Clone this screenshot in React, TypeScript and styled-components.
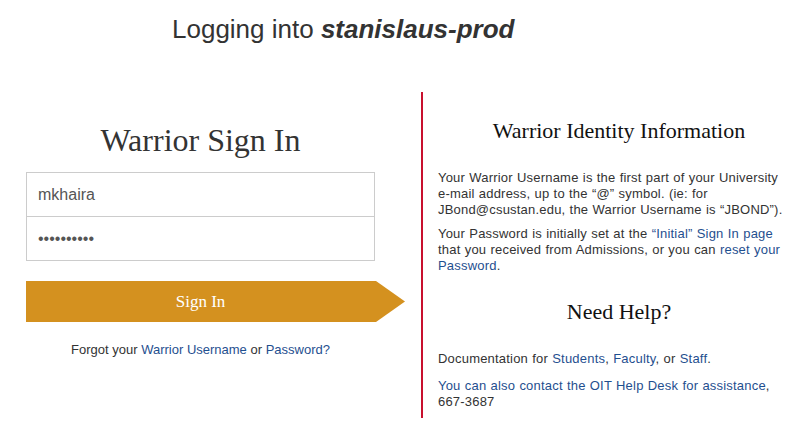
import React from "react";
import styled, { createGlobalStyle } from "styled-components";

const Global = createGlobalStyle`
  html, body { margin: 0; padding: 0; background: #fff; }
  body { font-family: "Liberation Sans", Arial, sans-serif; color: #333; }
  * { box-sizing: border-box; }
`;

const Page = styled.div`
  width: 803px;
  height: 441px;
  overflow: hidden;
`;

const Header = styled.h1`
  margin: 0;
  height: 92px;
  padding: 14px 0 0 172px;
  font-family: "Liberation Sans", Arial, sans-serif;
  font-size: 26px;
  font-weight: normal;
  line-height: 30px;
  color: #333;
  strong { font-weight: bold; font-style: italic; }
`;

const Main = styled.div`
  display: flex;
  align-items: flex-start;
`;

const LeftCol = styled.div`
  width: 421px;
  padding: 30px 46px 0 26px;
  display: flex;
  flex-direction: column;
`;

const SignInTitle = styled.h2`
  margin: 0 0 14px;
  text-align: center;
  font-family: "Liberation Serif", "Times New Roman", serif;
  font-weight: normal;
  font-size: 32px;
  line-height: 36px;
  color: #333;
`;

const Field = styled.input<{ $first?: boolean }>`
  display: block;
  width: 349px;
  height: 45px;
  margin: ${(p) => (p.$first ? "0" : "-1px 0 0")};
  padding: 0 11px;
  border: 1px solid #ccc;
  border-radius: 0;
  font-family: "Liberation Sans", Arial, sans-serif;
  font-size: 16px;
  color: #555;
  background: #fff;
  outline: none;
`;

const SignInButton = styled.button`
  margin-top: 20px;
  width: 379px;
  height: 41px;
  padding: 0 30px 0 0;
  border: 0;
  background: #d4911f;
  clip-path: polygon(0 0, 350px 0, 379px 50%, 350px 100%, 0 100%);
  color: #fff;
  font-family: "Liberation Serif", "Times New Roman", serif;
  font-size: 17px;
  cursor: pointer;
`;

const Forgot = styled.p`
  margin: 20px 0 0;
  text-align: center;
  font-size: 13px;
  line-height: 16px;
  color: #333;
`;

const Link = styled.a`
  color: #1f4f8f;
  text-decoration: none;
`;

const RightCol = styled.div`
  width: 382px;
  border-left: 2px solid #c8102e;
  padding: 26px 15px 8px 15px;
`;

const InfoTitle = styled.h3<{ $gapTop?: number }>`
  margin: ${(p) => p.$gapTop ?? 0}px 0 26px;
  padding-left: 12px;
  text-align: center;
  font-family: "Liberation Serif", "Times New Roman", serif;
  font-weight: normal;
  font-size: 22px;
  line-height: 26px;
  color: #111;
`;

const Para = styled.p<{ $gap?: number }>`
  margin: ${(p) => p.$gap ?? 0}px 0 0;
  font-size: 13px;
  line-height: 16px;
  letter-spacing: 0.2px;
  word-spacing: 0.4px;
  text-align: left;
  color: #333;
`;

const NoWrap = styled.span`
  white-space: nowrap;
`;

export default function App() {
  return (
    <Page>
      <Global />
      <Header>
        Logging into <strong>stanislaus-prod</strong>
      </Header>
      <Main>
        <LeftCol>
          <SignInTitle>Warrior Sign In</SignInTitle>
          <Field $first type="text" defaultValue="mkhaira" />
          <Field type="password" defaultValue="mkhaira123" />
          <SignInButton>Sign In</SignInButton>
          <Forgot>
            Forgot your <Link href="#">Warrior Username</Link> or{" "}
            <Link href="#">Password?</Link>
          </Forgot>
        </LeftCol>
        <RightCol>
          <InfoTitle>Warrior Identity Information</InfoTitle>
          <Para>
            Your Warrior Username is the first part of your University{" "}
            <NoWrap>e-mail</NoWrap> address, up to the “@” symbol. (ie: for
            JBond@csustan.edu, the Warrior Username is “JBOND”).
          </Para>
          <Para $gap={8}>
            Your Password is initially set at the{" "}
            <Link href="#">“Initial” Sign In page</Link> that you received from
            Admissions, or you can <Link href="#">reset your Password</Link>.
          </Para>
          <InfoTitle $gapTop={25}>Need Help?</InfoTitle>
          <Para>
            Documentation for <Link href="#">Students</Link>,{" "}
            <Link href="#">Faculty</Link>, or <Link href="#">Staff</Link>.
          </Para>
          <Para $gap={11}>
            <Link href="#">
              You can also contact the OIT Help Desk for assistance
            </Link>
            , 667-3687
          </Para>
        </RightCol>
      </Main>
    </Page>
  );
}
